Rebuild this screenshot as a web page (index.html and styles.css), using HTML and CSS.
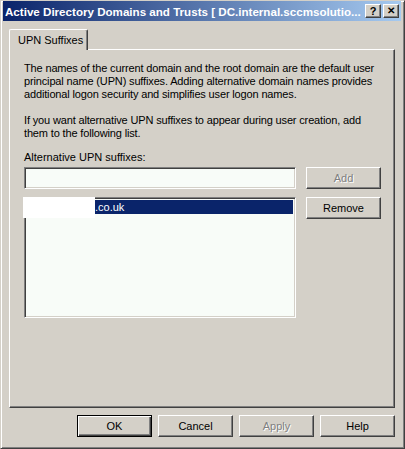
FILE: index.html
```html
<!DOCTYPE html>
<html lang="en">
<head>
    <meta charset="UTF-8">
    <title>Active Directory Domains and Trusts</title>
    <link rel="stylesheet" href="styles.css">
</head>
<body>
    <div class="window">
        <div class="titlebar">
            <span class="title">Active Directory Domains and Trusts [ DC.internal.sccmsolutio...</span>
            <div class="title-buttons">
                <span class="cap-btn">?</span>
                <span class="cap-btn cap-close">&#x2715;</span>
            </div>
        </div>

        <div class="content">
            <div class="tabs">
                <div class="tab">UPN Suffixes</div>
            </div>
            <div class="panel">
                <p>The names of the current domain and the root domain are the default user principal name (UPN) suffixes. Adding alternative domain names provides additional logon security and simplifies user logon names.</p>
                <p class="note">If you want alternative UPN suffixes to appear during user creation, add them to the following list.</p>
                <label class="field-label">Alternative UPN suffixes:</label>
                <div class="row">
                    <div class="input"></div>
                    <button class="btn disabled">Add</button>
                </div>
                <div class="row list-row">
                    <div class="listbox">
                        <div class="item selected"><span class="redact"></span>.co.uk</div>
                    </div>
                    <button class="btn">Remove</button>
                </div>
            </div>

            <div class="actions">
                <button class="btn default">OK</button>
                <button class="btn">Cancel</button>
                <button class="btn disabled">Apply</button>
                <button class="btn">Help</button>
            </div>
        </div>
    </div>
</body>
</html>
```

FILE: styles.css
```css
* {
    box-sizing: border-box;
}
body {
    margin: 0;
    font-family: "Liberation Sans", Arial, sans-serif;
    font-size: 11px;
    color: #000;
    background: #d4d0c8;
}
.window {
    width: 405px;
    height: 449px;
    background: #d4d0c8;
    border: 1px solid;
    border-color: #d4d0c8 #404040 #404040 #d4d0c8;
    box-shadow: inset 1px 1px #fff, inset -1px -1px #808080;
    padding: 0 3px 3px 2px;
}
.titlebar {
    height: 20px;
    display: flex;
    align-items: center;
    justify-content: space-between;
    padding: 0 2px 0 2px;
    background: linear-gradient(to right, #0a246a, #a6caf0);
}
.title {
    color: #fff;
    font-weight: bold;
    font-size: 11.6px;
    white-space: nowrap;
}
.title-buttons {
    display: flex;
    gap: 2px;
}
.cap-btn {
    width: 16px;
    height: 14px;
    background: #d4d0c8;
    border: 1px solid;
    border-color: #fff #404040 #404040 #fff;
    box-shadow: inset -1px -1px #808080;
    font-weight: bold;
    font-size: 11px;
    line-height: 12px;
    text-align: center;
}
.cap-close {
    font-size: 10px;
}
.content {
    padding: 8px 4px 0 6px;
}
.tabs {
    display: flex;
    height: 20px;
}
.tab {
    width: 79px;
    height: 21px;
    padding: 4px 0 0 8px;
    background: #d4d0c8;
    border: 1px solid;
    border-bottom: none;
    border-color: #fff #404040 #404040 #fff;
    border-radius: 2px 2px 0 0;
    box-shadow: inset -1px 0 #808080;
    position: relative;
    z-index: 1;
}
.panel {
    width: 386px;
    height: 359px;
    border: 1px solid;
    border-color: #fff #404040 #404040 #fff;
    box-shadow: inset -1px -1px #808080;
    padding: 12px 4px 0 14px;
}
.panel p {
    margin: 0 0 13px 0;
    line-height: 13px;
    letter-spacing: -0.15px;
}
.panel p.note {
    max-width: 345px;
    margin-bottom: 11px;
}
.field-label {
    display: block;
    line-height: 13px;
    margin-bottom: 3px;
}
.row {
    display: flex;
    gap: 10px;
    align-items: flex-start;
}
.list-row {
    margin-top: 8px;
}
.input,
.listbox {
    width: 272px;
    height: 22px;
    background: #f8fcf8;
    border: 1px solid;
    border-color: #808080 #fff #fff #808080;
    box-shadow: inset 1px 1px #404040, inset -1px -1px #d4d0c8;
}
.listbox {
    height: 121px;
    padding: 2px;
}
.item {
    height: 14px;
    line-height: 14px;
    padding-left: 68px;
    position: relative;
}
.item.selected {
    background: #0a246a;
    color: #fff;
}
.redact {
    position: absolute;
    left: -4px;
    top: -3px;
    width: 72px;
    height: 21px;
    background: #fff;
}
.btn {
    width: 75px;
    height: 22px;
    padding: 0;
    font-family: inherit;
    font-size: 11px;
    color: #000;
    background: #d4d0c8;
    border: 1px solid;
    border-color: #fff #404040 #404040 #fff;
    box-shadow: inset -1px -1px #808080;
}
.btn.disabled {
    color: #808080;
    text-shadow: 1px 1px #fff;
}
.btn.default {
    border: 1px solid #000;
    box-shadow: inset 1px 1px #fff, inset -1px -1px #404040, inset -2px -2px #808080;
}
.actions {
    display: flex;
    justify-content: flex-end;
    gap: 6px;
    width: 386px;
    margin-top: 7px;
}
```
